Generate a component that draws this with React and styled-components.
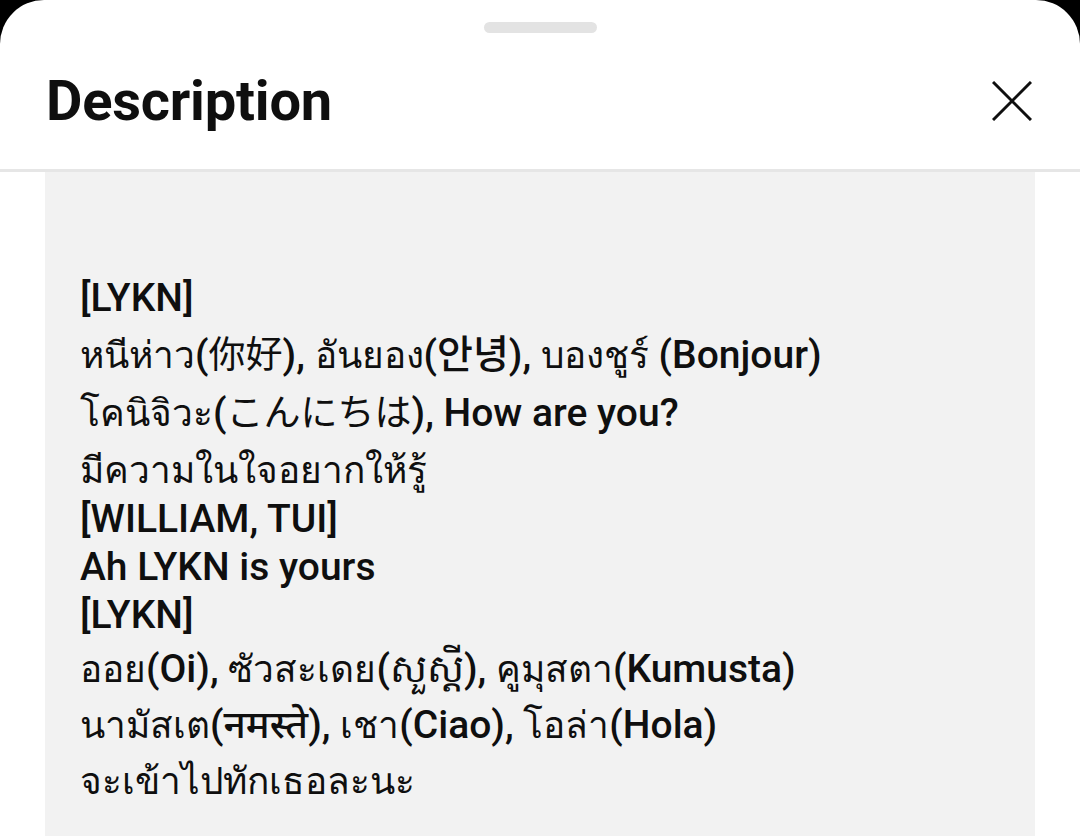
import React from 'react';
import styled, { createGlobalStyle } from 'styled-components';

const GlobalStyle = createGlobalStyle`
    html, body {
        margin: 0;
        padding: 0;
        background: #000;
    }
    body {
        font-family: Roboto, "Noto Sans", "Noto Sans CJK KR", "Noto Sans CJK JP", "Noto Sans CJK SC", sans-serif;
        color: #0f0f0f;
    }
`

const Sheet = styled.div`
    background: #fff;
    border-radius: 44px 44px 0 0;
    height: 836px;
    overflow: hidden;
    display: flex;
    flex-direction: column;
`

const Handle = styled.div`
    width: 113px;
    height: 11px;
    border-radius: 6px;
    background: #e3e3e3;
    margin: 22px auto 0;
    flex-shrink: 0;
`

const Header = styled.div`
    display: flex;
    align-items: center;
    justify-content: space-between;
    height: 136px;
    padding: 0 46px;
    border-bottom: 3px solid #e6e6e6;
    flex-shrink: 0;
`

const Title = styled.h1`
    margin: 0;
    font-size: 56px;
    font-weight: 700;
    letter-spacing: -0.2px;
    color: #0f0f0f;
`

const CloseButton = styled.button`
    border: 0;
    background: none;
    padding: 0;
    width: 44px;
    height: 44px;
    display: flex;
    align-items: center;
    justify-content: center;
    cursor: pointer;
`

const Panel = styled.div`
    flex: 1;
    margin: 0 45px;
    background: #f2f2f2;
    padding: 102px 35px 0;
`

// lines with thai script sit a little taller than plain latin ones
const Line = styled.div`
    font-size: 39px;
    font-weight: 500;
    line-height: 48px;
    white-space: nowrap;
    padding-top: ${p => p.$pad || 0}px;
`

// runs of thai / japanese-chinese text are set lighter and a bit smaller
const Run = styled.span`
    font-weight: 400;
    font-size: 37px;
`

const THAI = /[\u0E00-\u0E7F]/;
const CJK = /[\u3040-\u30FF\u4E00-\u9FFF]/;

function renderText(text) {
    return text.split(/([\u0E00-\u0E7F]+|[\u3040-\u30FF\u4E00-\u9FFF]+)/).map((part, i) => {
        if (!part) return null;
        if (THAI.test(part) || CJK.test(part)) return <Run key={i}>{part}</Run>;
        return <React.Fragment key={i}>{part}</React.Fragment>;
    });
}

const lines = [
    { text: '[LYKN]' },
    { text: 'หนีห่าว(你好), อันยอง(안녕), บองชูร์ (Bonjour)', pad: 9 },
    { text: 'โคนิจิวะ(こんにちは), How are you?', pad: 9 },
    { text: 'มีความในใจอยากให้รู้', pad: 8 },
    { text: '[WILLIAM, TUI]' },
    { text: 'Ah LYKN is yours' },
    { text: '[LYKN]' },
    { text: 'ออย(Oi), ซัวสะเดย(សួស្តី), คูมุสตา(Kumusta)', pad: 6 },
    { text: 'นามัสเต(नमस्ते), เชา(Ciao), โอล่า(Hola)', pad: 7 },
    { text: 'จะเข้าไปทักเธอละนะ', pad: 7 },
];

export default function App() {
    return (
        <>
            <GlobalStyle />
            <Sheet>
                <Handle />
                <Header>
                    <Title>Description</Title>
                    <CloseButton aria-label="Close">
                        <svg width="40" height="40" viewBox="0 0 40 40">
                            <path d="M1 1 L39 39 M39 1 L1 39" stroke="#0f0f0f" strokeWidth="3" fill="none" />
                        </svg>
                    </CloseButton>
                </Header>
                <Panel>
                    {lines.map((l, i) => (
                        <Line key={i} $pad={l.pad}>{renderText(l.text)}</Line>
                    ))}
                </Panel>
            </Sheet>
        </>
    );
}
